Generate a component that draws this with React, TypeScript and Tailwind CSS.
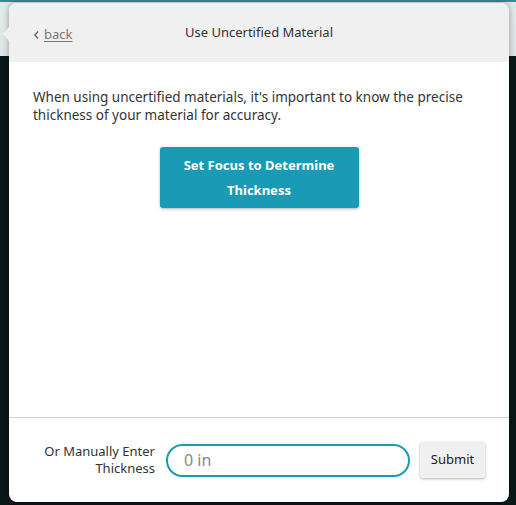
import { useState } from 'react';

const App = () => {
  const [thickness, setThickness] = useState('');

  return (
    <div
      className="h-[505px] w-[516px] overflow-hidden pl-[9px] pt-[3px] bg-[linear-gradient(to_bottom,#3a8a94_0px,#3a8a94_2px,#e4e9ea_2px,#dfe5e6_56px,#0a1717_56px)]"
      style={{ fontFamily: '"Noto Sans", "Open Sans", sans-serif' }}
    >
      <div className="relative flex h-[499px] w-[500px] flex-col rounded-lg bg-white shadow-[0_0_6px_rgba(0,0,0,0.35)]">
        {/* popover arrow */}
        <div className="absolute left-[-6px] top-[24px] h-0 w-0 border-y-[7px] border-r-[6px] border-y-transparent border-r-[#f0f0f0]" />

        {/* Header */}
        <div className="relative flex h-[59px] shrink-0 items-center justify-center rounded-t-lg bg-[#f0f0f0]">
          <button className="absolute left-[24px] top-[22px] flex items-center gap-[4px] text-[13px] text-[#777]">
            <svg width="7" height="10" viewBox="0 0 7 10" fill="none" stroke="#666" strokeWidth="1.4">
              <path d="M5 1.5 L1.8 5 L5 8.5" />
            </svg>
            <span className="underline underline-offset-2">back</span>
          </button>
          <h1 className="mt-[1px] text-[13px] text-[#333]">Use Uncertified Material</h1>
        </div>

        {/* Body */}
        <div className="flex flex-1 flex-col px-[24px] pt-[26px]">
          <p className="text-[13.5px] leading-[18px] text-[#333]">
            When using uncertified materials, it's important to know the precise thickness of your
            material for accuracy.
          </p>
          <div className="mt-[23px] flex justify-center">
            <button className="h-[61px] w-[199px] rounded-[3px] bg-[#1a9bb5] px-4 text-[13px] font-bold leading-[25px] text-white shadow-[0_1px_3px_rgba(0,0,0,0.3)]">
              Set Focus to Determine Thickness
            </button>
          </div>
        </div>

        {/* Footer */}
        <div className="flex h-[85px] shrink-0 items-center border-t border-[#cfcfcf] pl-[20px] pr-[24px]">
          <label className="w-[126px] text-right text-[13px] leading-[17px] text-[#333]">
            Or Manually Enter Thickness
          </label>
          <input
            autoFocus
            value={thickness}
            onChange={(e) => setThickness(e.target.value)}
            placeholder="0 in"
            className="ml-[11px] h-[33px] w-[244px] rounded-full border-2 border-[#1a9bb5] px-[16px] text-[16px] text-[#333] caret-[#333] outline-none placeholder:text-[#888]"
          />
          <button className="ml-[10px] h-[36px] w-[65px] rounded-[3px] bg-[#f0f0f0] text-[13px] text-[#222] shadow-[0_1px_3px_rgba(0,0,0,0.3)]">
            Submit
          </button>
        </div>
      </div>
    </div>
  );
};

export default App;
